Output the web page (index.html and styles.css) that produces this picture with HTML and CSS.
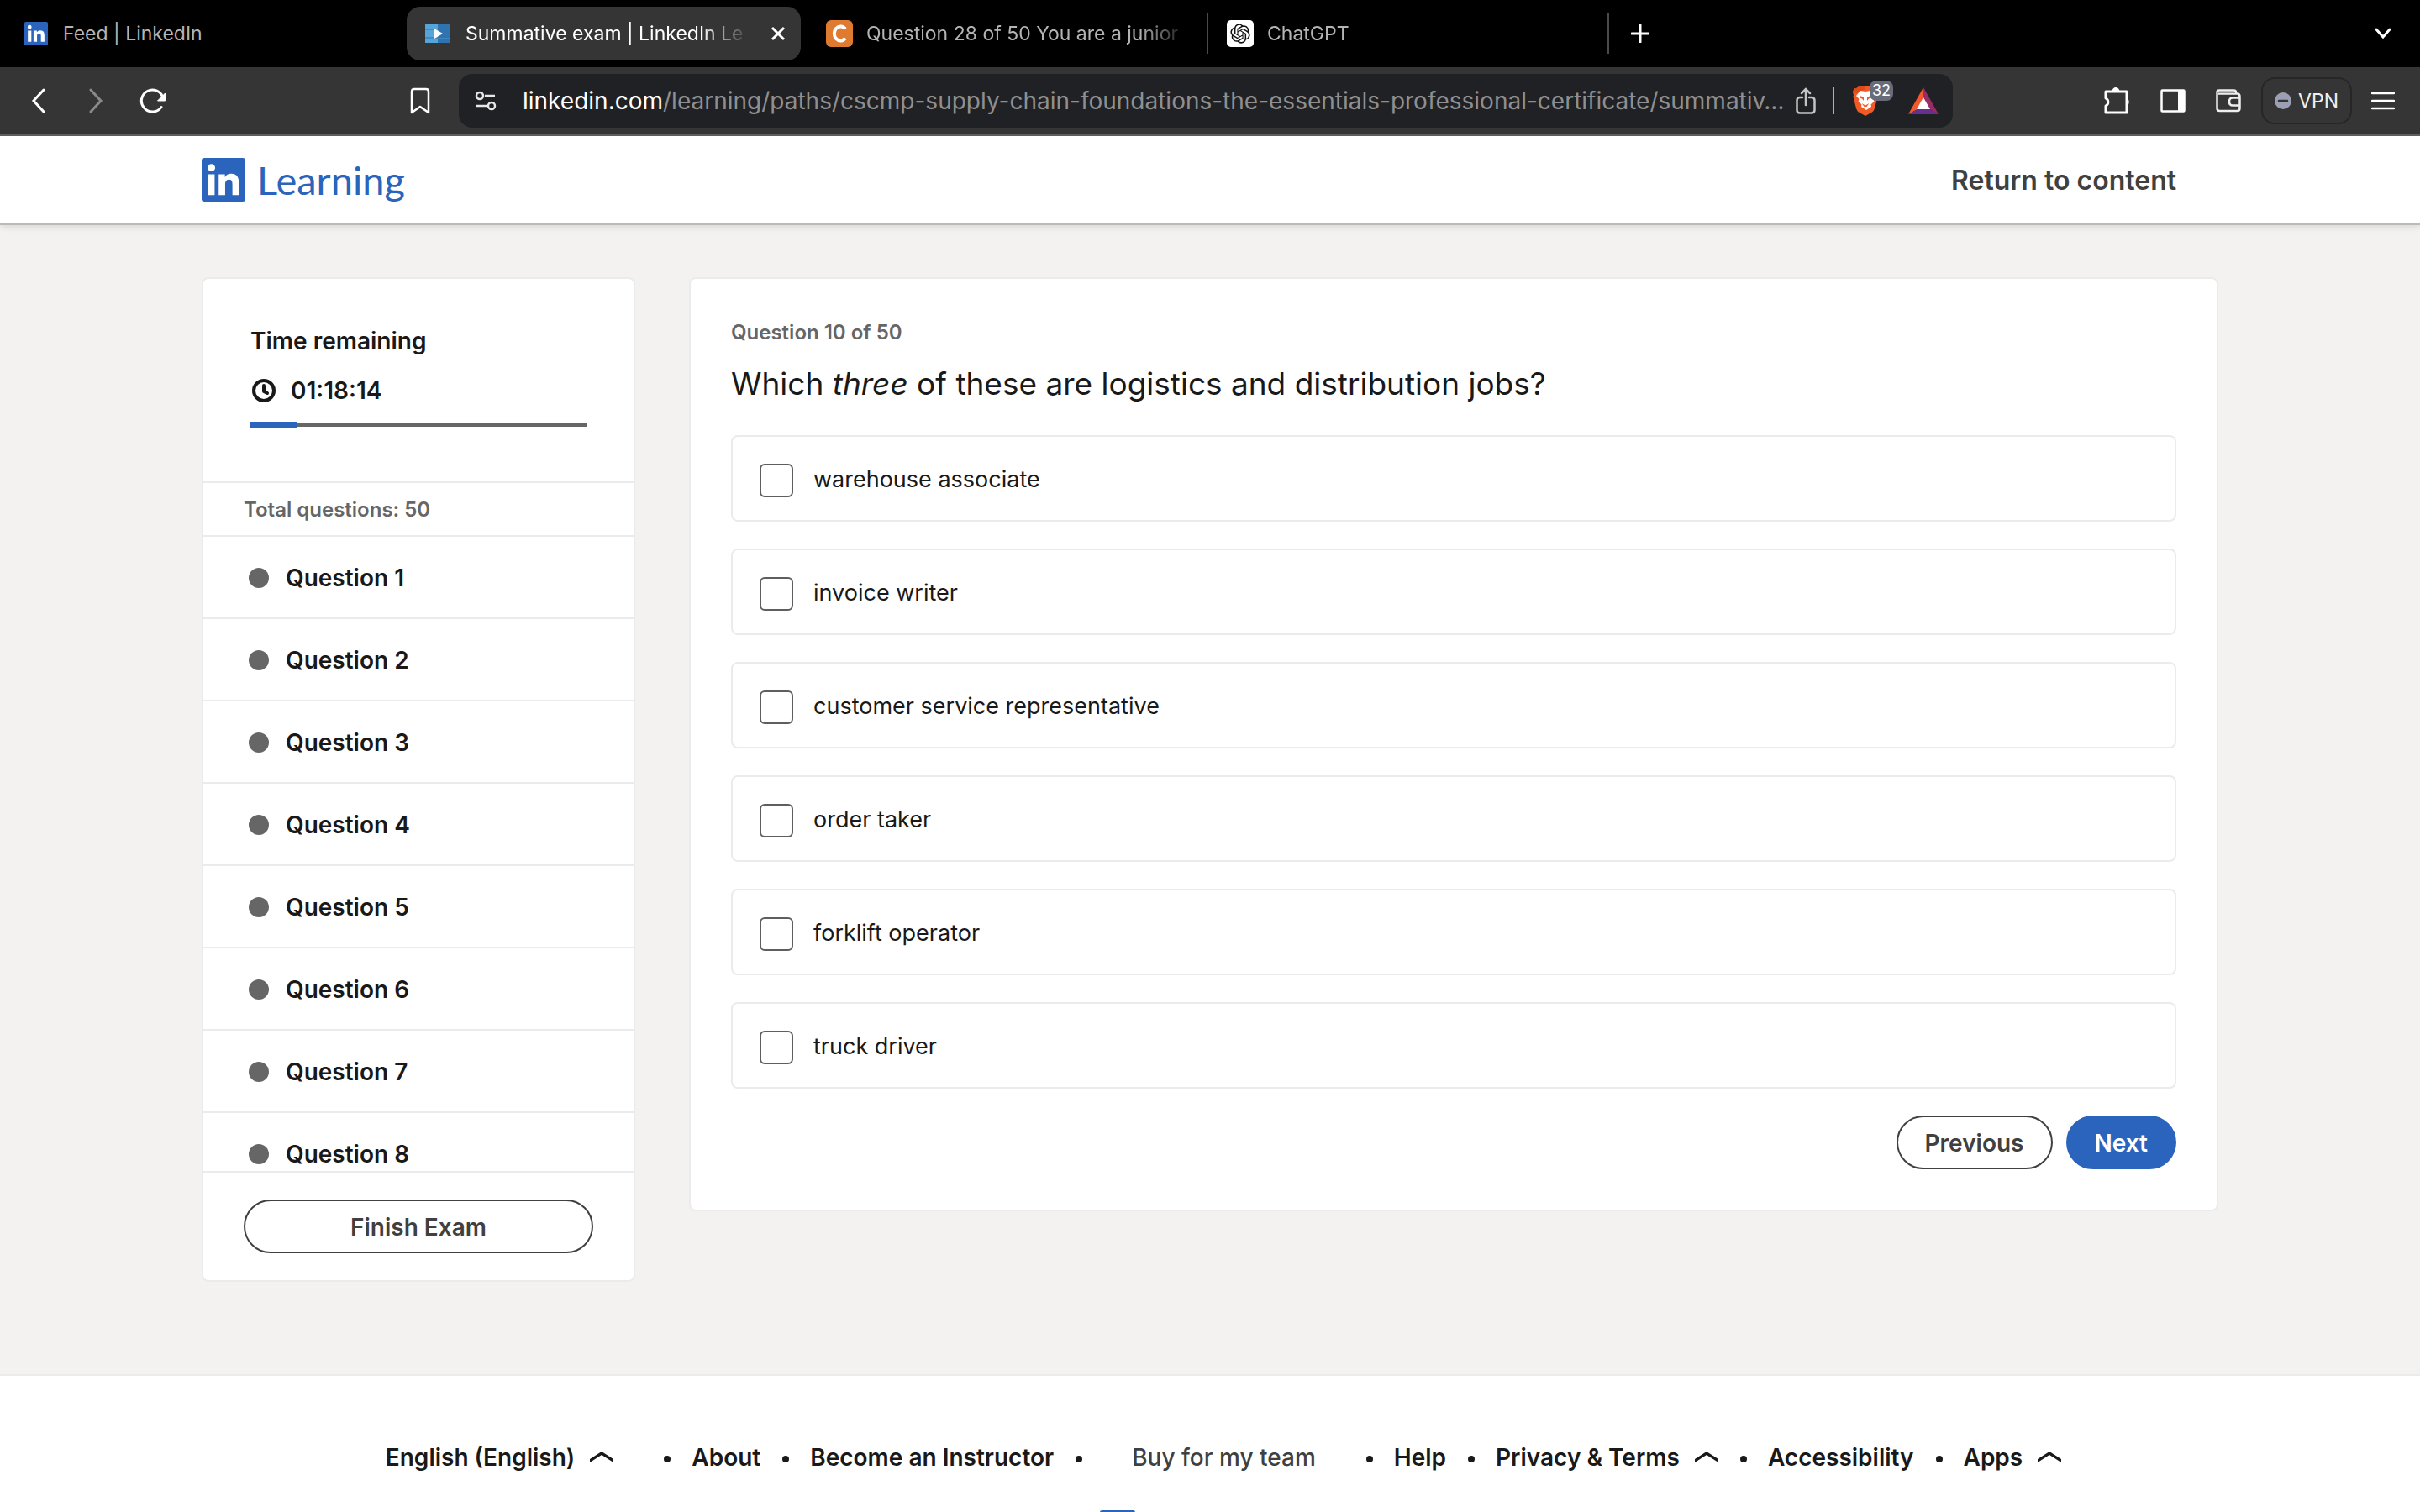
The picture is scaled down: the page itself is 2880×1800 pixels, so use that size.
FILE: index.html
```html
<!DOCTYPE html>
<html lang="en">
<head>
<meta charset="utf-8">
<title>Summative exam | LinkedIn Learning</title>
<link rel="stylesheet" href="styles.css">
</head>
<body>
<svg class="defs" aria-hidden="true">
  <symbol id="in-logo" viewBox="0 0 24 24">
    <rect width="24" height="24" rx="1.4" fill="#2b64bc"/>
    <path fill="#fff" d="M20.447 20.452h-3.554v-5.569c0-1.328-.027-3.037-1.852-3.037-1.853 0-2.136 1.445-2.136 2.939v5.667H9.351V9h3.414v1.561h.046c.477-.9 1.637-1.85 3.37-1.85 3.601 0 4.267 2.37 4.267 5.455v6.286zM5.337 7.433a2.062 2.062 0 0 1-2.063-2.065 2.064 2.064 0 1 1 2.063 2.065zm1.782 13.019H3.555V9h3.564v11.452z"/>
  </symbol>
  <symbol id="caret-up" viewBox="0 0 28 14">
    <path d="M0 13V9L14 0l14 9v4L14 4z" fill="currentColor"/>
  </symbol>
</svg>

<div class="browser">
  <div class="tabs" role="tablist">
    <button class="tab" role="tab">
      <svg class="favicon" width="28" height="28"><use href="#in-logo"/></svg>
      <span class="tab-title">Feed | LinkedIn</span>
    </button>
    <button class="tab tab-active" role="tab" aria-selected="true">
      <svg class="favicon" width="30" height="22" viewBox="0 0 30 22">
        <rect width="15" height="22" fill="#56a5d8"/><rect x="15" width="15" height="22" fill="#2f74b0"/>
        <path d="M0 6h15M0 16h15" stroke="#3f8cc4" stroke-width="2"/><path d="M15 17h15" stroke="#3d86c0" stroke-width="2"/>
        <path d="M11 5v12l10-6z" fill="#fff"/>
      </svg>
      <span class="tab-title">Summative exam | LinkedIn Le</span>
      <svg class="tab-close" width="18" height="18" viewBox="0 0 18 18"><path d="M2 2l14 14M16 2L2 16" stroke="#fff" stroke-width="3"/></svg>
    </button>
    <button class="tab tab-ruled" role="tab">
      <svg class="favicon" width="32" height="32" viewBox="0 0 32 32">
        <rect width="32" height="32" rx="6" fill="#e07a2e"/>
        <path d="M23 10.500a7.500 8.500 0 1 0 0 11" fill="none" stroke="#fff" stroke-width="4"/>
      </svg>
      <span class="tab-title">Question 28 of 50 You are a junior</span>
    </button>
    <button class="tab tab-ruled" role="tab">
      <svg class="favicon" width="32" height="32" viewBox="-4.500 -4.500 33 33">
        <rect x="-4.500" y="-4.500" width="33" height="33" rx="5" fill="#fff"/>
        <path fill="#111" d="M22.2819 9.8211a5.9847 5.9847 0 0 0-.5157-4.9108 6.0462 6.0462 0 0 0-6.5098-2.9A6.0651 6.0651 0 0 0 4.9807 4.1818a5.9847 5.9847 0 0 0-3.9977 2.9 6.0462 6.0462 0 0 0 .7427 7.0966 5.98 5.98 0 0 0 .511 4.9107 6.051 6.051 0 0 0 6.5146 2.9001A5.9847 5.9847 0 0 0 13.2599 24a6.0557 6.0557 0 0 0 5.7718-4.2058 5.9894 5.9894 0 0 0 3.9977-2.9001 6.0557 6.0557 0 0 0-.7475-7.0729zm-9.022 12.6081a4.4755 4.4755 0 0 1-2.8764-1.0408l.1419-.0804 4.7783-2.7582a.7948.7948 0 0 0 .3927-.6813v-6.7369l2.02 1.1686a.071.071 0 0 1 .038.052v5.5826a4.504 4.504 0 0 1-4.4945 4.4944zm-9.6607-4.1254a4.4708 4.4708 0 0 1-.5346-3.0137l.142.0852 4.783 2.7582a.7712.7712 0 0 0 .7806 0l5.8428-3.3685v2.3324a.0804.0804 0 0 1-.0332.0615L9.74 19.9502a4.4992 4.4992 0 0 1-6.1408-1.6464zM2.3408 7.8956a4.485 4.485 0 0 1 2.3655-1.9728V11.6a.7664.7664 0 0 0 .3879.6765l5.8144 3.3543-2.0201 1.1685a.0757.0757 0 0 1-.071 0l-4.8303-2.7865A4.504 4.504 0 0 1 2.3408 7.872zm16.5963 3.8558L13.1038 8.364 15.1192 7.2a.0757.0757 0 0 1 .071 0l4.8303 2.7913a4.4944 4.4944 0 0 1-.6765 8.1042v-5.6772a.79.79 0 0 0-.407-.667zm2.0107-3.0231l-.142-.0852-4.7735-2.7818a.7759.7759 0 0 0-.7854 0L9.409 9.2297V6.8974a.0662.0662 0 0 1 .0284-.0615l4.8303-2.7866a4.4992 4.4992 0 0 1 6.6802 4.66zM8.3065 12.863l-2.02-1.1638a.0804.0804 0 0 1-.038-.0567V6.0742a4.4992 4.4992 0 0 1 7.3757-3.4537l-.142.0805L8.704 5.459a.7948.7948 0 0 0-.3927.6813zm1.0976-2.3654l2.602-1.4998 2.6069 1.4998v2.9994l-2.5974 1.4997-2.6067-1.4997Z"/>
      </svg>
      <span class="tab-title">ChatGPT</span>
    </button>
    <button class="icon-button new-tab" aria-label="New tab">
      <svg width="22" height="22" viewBox="0 0 22 22"><path d="M11 1v20M1 11h20" stroke="#fff" stroke-width="3" stroke-linecap="round"/></svg>
    </button>
    <button class="icon-button tab-search" aria-label="Search tabs">
      <svg width="20" height="14" viewBox="0 0 20 14"><path d="M2 2l8 9 8-9" fill="none" stroke="#fff" stroke-width="3" stroke-linecap="round"/></svg>
    </button>
  </div>

  <div class="toolbar">
    <div class="nav-tools">
      <button class="icon-button" aria-label="Back">
        <svg width="18" height="30" viewBox="0 0 18 30"><path d="M15 2L3 15l12 13" fill="none" stroke="#fff" stroke-width="3" stroke-linecap="round"/></svg>
      </button>
      <button class="icon-button" aria-label="Forward">
        <svg width="18" height="30" viewBox="0 0 18 30"><path d="M3 2l12 13L3 28" fill="none" stroke="#8a8a8a" stroke-width="3" stroke-linecap="round"/></svg>
      </button>
      <button class="icon-button" aria-label="Reload">
        <svg width="32" height="30" viewBox="0 0 32 30"><path d="M28 12A13 13 0 1 0 26 22.500" fill="none" stroke="#fff" stroke-width="3" stroke-linecap="round"/><path d="M30.500 6v9h-9z" fill="#fff" stroke="#fff" stroke-linejoin="round"/></svg>
      </button>
      <button class="icon-button bookmark" aria-label="Bookmark">
        <svg width="24" height="32" viewBox="0 0 24 32"><path d="M2 30V5q0-3 3-3h14q3 0 3 3v25l-10-7z" fill="none" stroke="#fff" stroke-width="2.500" stroke-linejoin="round"/></svg>
      </button>
    </div>

    <div class="address">
      <svg class="site-icon" width="26" height="24" viewBox="0 0 26 24"><g fill="none" stroke="#e8e8e8" stroke-width="2.500"><circle cx="6" cy="6" r="4"/><path d="M12 6h12M2 18h12"/><circle cx="20" cy="18" r="4"/></g></svg>
      <div class="url"><span class="url-host">linkedin.com</span>/learning/paths/cscmp-supply-chain-foundations-the-essentials-professional-certificate/summativ…</div>
      <button class="plain share" aria-label="Share">
        <svg width="24" height="32" viewBox="0 0 24 32"><path d="M8 12H5q-3.500 0-3.500 3.500V27q0 3.500 3.500 3.500h14q3.500 0 3.500-3.500V15.500q0-3.500-3.500-3.500h-3M12 21V3M7 7l5-5 5 5" fill="none" stroke="#c4c4c4" stroke-width="2.500" stroke-linecap="round"/></svg>
      </button>
      <span class="address-rule"></span>
      <button class="plain shields" aria-label="Brave Shields">
        <svg width="30" height="36" viewBox="0 0 30 36">
          <path d="M7 0h16l3 3 3-.500L30 8l-1 3 .500 2-3.500 14q-1 3-3 4.500L15 36l-8-4.500q-2-1.500-3-4.500L.500 13 1 11 0 8l1.500-5L4 3.500z" fill="#f15a24"/>
          <path d="M7 0h8v4L4 9 0 8l1.500-5L4 3.500z" fill="#dd4a1c"/>
          <path d="M9 6l6 1 6-1 5 6-1.500 4 1 2.500-4 4 .5 2.500-6 4-6-4 .5-2.500-4-4 1-2.500L4 12z" fill="#fff"/>
          <path d="M8 12l5 1.500v4.500l-2-2.500-3-1zM22 12l-5 1.500v4.500l2-2.500 3-1zM10.500 21l4.500 2.500 4.500-2.500-3 4h-3z" fill="#f15a24"/>
        </svg>
        <span class="badge">32</span>
      </button>
      <button class="plain" aria-label="Brave Rewards">
        <svg width="36" height="32" viewBox="0 0 36 32">
          <path d="M18 0v14l-7 12L0 32z" fill="#f4592e"/><path d="M18 0l18 32-11-6-7-12z" fill="#992c66"/><path d="M0 32l11-6h14l11 6z" fill="#653090"/><path d="M18 12l8 14H10z" fill="#fff"/>
        </svg>
      </button>
    </div>

    <div class="page-tools">
      <button class="icon-button" aria-label="Extensions">
        <svg width="34" height="34" viewBox="0 0 34 34"><path d="M3 6h25v25H3v-8a5 5 0 0 0 0-9z" fill="none" stroke="#fff" stroke-width="3" stroke-linejoin="round"/><path d="M10.500 6a4.500 5 0 0 1 9 0zM28 14a5 5 0 0 1 0 9z" fill="#fff"/></svg>
      </button>
      <button class="icon-button" aria-label="Sidebar">
        <svg width="30" height="28" viewBox="0 0 30 28"><rect x="1.500" y="1.500" width="27" height="25" rx="1" fill="none" stroke="#fff" stroke-width="2.500"/><path d="M21 1h8v26h-8z" fill="#fff"/></svg>
      </button>
      <button class="icon-button" aria-label="Wallet">
        <svg width="30" height="28" viewBox="0 0 30 28"><g fill="none" stroke="#eee" stroke-width="2.500"><path d="M24 5V4q0-2.500-2.500-2.500H4Q1.500 1.500 1.500 4v19q0 3 3 3h21q3 0 3-3V9q0-3.500-3-3.500H3"/><path d="M28 10.500h-8q-4 0-4 4.500t4 4.500h8"/></g><path d="M2 3h21v2H2z" fill="#999"/></svg>
      </button>
      <button class="vpn">
        <svg width="20" height="20" viewBox="0 0 20 20"><circle cx="10" cy="10" r="10" fill="#9c9fb3"/><path d="M5 10h10" stroke="#353535" stroke-width="2.500" stroke-linecap="round"/></svg>
        VPN
      </button>
      <button class="icon-button menu" aria-label="Menu">
        <svg width="28" height="22" viewBox="0 0 28 22"><path d="M1 2h26M1 11h26M1 20h26" stroke="#fff" stroke-width="2.500" stroke-linecap="round"/></svg>
      </button>
    </div>
  </div>

  <div class="page">
    <header class="site-header">
      <a class="brand" href="#">
        <svg width="52" height="52"><use href="#in-logo"/></svg>
        <span>Learning</span>
      </a>
      <a class="return" href="#">Return to content</a>
    </header>

    <main class="exam">
      <aside class="card sidebar">
        <section class="timer">
          <h2>Time remaining</h2>
          <div class="clock">
            <svg width="30" height="30" viewBox="0 0 30 30"><circle cx="16" cy="15" r="12" fill="none" stroke="#191919" stroke-width="4"/><path d="M16 9v7l4 2" fill="none" stroke="#191919" stroke-width="4" stroke-linecap="round" stroke-linejoin="round"/></svg>
            <time>01:18:14</time>
          </div>
          <div class="progress"><div class="progress-fill" style="width: 14%"></div></div>
        </section>
        <h3 class="total">Total questions: 50</h3>
        <ol class="questions">
          <li><a href="#">Question 1</a></li>
          <li><a href="#">Question 2</a></li>
          <li><a href="#">Question 3</a></li>
          <li><a href="#">Question 4</a></li>
          <li><a href="#">Question 5</a></li>
          <li><a href="#">Question 6</a></li>
          <li><a href="#">Question 7</a></li>
          <li><a href="#">Question 8</a></li>
        </ol>
        <div class="finish"><button class="pill">Finish Exam</button></div>
      </aside>

      <form class="card question">
        <p class="step">Question 10 of 50</p>
        <h1>Which <em>three</em> of these are logistics and distribution jobs?</h1>
        <div class="options">
          <label class="option"><input type="checkbox"><span>warehouse associate</span></label>
          <label class="option"><input type="checkbox"><span>invoice writer</span></label>
          <label class="option"><input type="checkbox"><span>customer service representative</span></label>
          <label class="option"><input type="checkbox"><span>order taker</span></label>
          <label class="option"><input type="checkbox"><span>forklift operator</span></label>
          <label class="option"><input type="checkbox"><span>truck driver</span></label>
        </div>
        <div class="actions">
          <button type="button" class="pill">Previous</button>
          <button type="button" class="pill pill-primary">Next</button>
        </div>
      </form>
    </main>

    <footer class="site-footer">
      <ul class="links">
        <li class="wide"><button class="plain">English (English)<svg width="28" height="14"><use href="#caret-up"/></svg></button></li>
        <li><a href="#">About</a></li>
        <li><a href="#">Become an Instructor</a></li>
        <li class="wide muted"><a href="#">Buy for my team</a></li>
        <li><a href="#">Help</a></li>
        <li><button class="plain">Privacy &amp; Terms<svg width="28" height="14"><use href="#caret-up"/></svg></button></li>
        <li><a href="#">Accessibility</a></li>
        <li><button class="plain">Apps<svg width="28" height="14"><use href="#caret-up"/></svg></button></li>
      </ul>
      <div class="footer-brand"><svg width="42" height="42"><use href="#in-logo"/></svg></div>
    </footer>
  </div>
</div>
</body>
</html>
```
FILE: styles.css
```css
* { box-sizing: border-box; }

body {
  margin: 0;
  font: 28px/40px Inter, "Liberation Sans", sans-serif;
  color: #191919;
  background: #fff;
}

h1, h2, h3, p, ol, ul { margin: 0; padding: 0; list-style: none; }
a { color: inherit; text-decoration: none; }
button { font: inherit; color: inherit; cursor: pointer; }
svg { display: block; flex: none; }
.defs { display: none; }

.browser {
  display: flex;
  flex-direction: column;
  height: 100vh;
  overflow: hidden;
}

/* Tab strip */
.tabs {
  display: flex;
  flex: none;
  align-items: center;
  height: 80px;
  padding: 0 10px 0 7px;
  background: #000;
}
.tab {
  display: flex;
  align-items: center;
  flex: 0 1 477px;
  min-width: 0;
  height: 64px;
  padding: 0 22px;
  border: 0;
  background: none;
  color: #b4b4b4;
  font-size: 23px;
  line-height: 32px;
  text-align: left;
}
.favicon { margin-right: 18px; }
.tab-title {
  flex: 1;
  min-width: 0;
  white-space: nowrap;
}
.tab-active .tab-title,
.tab-ruled .tab-title { mask-image: linear-gradient(90deg, #000 calc(100% - 60px), transparent); }
.tab-active {
  flex-basis: 469px;
  margin-right: 8px;
  padding-right: 18px;
  border-radius: 16px;
  background: #353535;
  color: #fff;
}
.tab-close { margin-left: 24px; }
.tab-ruled { position: relative; }
.tab-ruled .favicon { margin-right: 16px; }
.tab-ruled::after {
  content: "";
  position: absolute;
  top: 8px;
  right: 0;
  width: 2px;
  height: 48px;
  background: #4a4a4a;
}

.icon-button {
  display: flex;
  flex: none;
  align-items: center;
  justify-content: center;
  width: 68px;
  height: 64px;
  padding: 0;
  border: 0;
  background: none;
}
.new-tab { width: 74px; }
.tab-search { margin-left: auto; }

/* Toolbar */
.toolbar {
  display: flex;
  flex: none;
  align-items: center;
  height: 82px;
  border-bottom: 2px solid #5e5e5e;
  background: #353535;
}
.nav-tools {
  display: flex;
  flex: 0 0 546px;
  padding: 0 12px;
}
.bookmark { margin-left: auto; }
.address {
  display: flex;
  flex: 1;
  align-items: center;
  min-width: 0;
  height: 64px;
  padding: 0 17px 0 19px;
  border-radius: 16px;
  background: #202124;
}
.url {
  flex: 1;
  min-width: 0;
  margin-left: 31px;
  overflow: hidden;
  white-space: nowrap;
  color: #8f8f90;
}
.url-host { color: #fff; }
.address-rule {
  width: 2px;
  height: 32px;
  margin: 0 22px 0 20px;
  background: #b0b0b0;
}
.plain {
  display: flex;
  align-items: center;
  padding: 0;
  border: 0;
  background: none;
}
.shields { position: relative; margin-right: 36px; }
.badge {
  position: absolute;
  top: -6px;
  left: 20px;
  width: 28px;
  height: 24px;
  border-radius: 8px;
  background: #686b7a;
  color: #fff;
  font-size: 18px;
  line-height: 24px;
  text-align: center;
}
.page-tools {
  display: flex;
  flex: 0 0 556px;
  align-items: center;
  justify-content: flex-end;
  padding-right: 11px;
}
.page-tools .icon-button { width: 66px; }
.vpn {
  display: flex;
  align-items: center;
  gap: 8px;
  height: 56px;
  margin: 0 4px 0 6px;
  padding: 0 14px;
  border: 2px solid #262626;
  border-radius: 16px;
  background: none;
  color: #f0f0f0;
  font-size: 23px;
  line-height: 32px;
}

/* Page */
.page {
  flex: 1;
  min-height: 0;
  overflow: hidden;
  background: #f3f2f0;
}
.site-header {
  display: flex;
  align-items: center;
  justify-content: space-between;
  height: 106px;
  padding: 0 290px 0 240px;
  border-bottom: 2px solid #bcbab8;
  background: #fff;
  box-shadow: 0 2px 8px rgba(0, 0, 0, .12);
}
.brand {
  display: flex;
  align-items: center;
  gap: 14px;
  color: #2b64bc;
  font: 47px/52px Lato, sans-serif;
}
.return {
  padding-top: 2px;
  color: #404040;
  font-size: 32px;
  font-weight: 600;
}
.exam {
  display: flex;
  align-items: flex-start;
  gap: 64px;
  padding: 62px 240px 110px;
}
.card {
  border: 2px solid #ebebeb;
  border-radius: 8px;
  background: #fff;
}

/* Sidebar */
.sidebar {
  flex: 0 0 516px;
  font-weight: 600;
}
.timer { padding: 54px 56px 63px; }
.timer h2 { font-size: 28px; font-weight: 600; }
.clock {
  display: flex;
  align-items: center;
  gap: 18px;
  margin: 19px 0 17px;
}
.progress {
  display: flex;
  align-items: center;
  height: 8px;
  background: linear-gradient(#666, #666) center / 100% 4px no-repeat;
}
.progress-fill { height: 8px; background: #2b64bc; }
.total {
  padding: 12px 48px 10px;
  border: solid #ebebeb;
  border-width: 2px 0;
  color: #666;
  font-size: 24px;
  font-weight: 600;
}
.questions { height: 755px; overflow: hidden; }
.questions li { border-bottom: 2px solid #ebebeb; }
.questions a {
  display: flex;
  align-items: center;
  gap: 20px;
  padding: 29px 54px 27px;
}
.questions a::before {
  content: "";
  width: 24px;
  height: 24px;
  border-radius: 50%;
  background: #666;
}
.finish { padding: 32px 48px; border-top: 2px solid #ebebeb; }
.finish .pill { width: 100%; }

.pill {
  height: 64px;
  padding: 2px 32px 0;
  border: 2px solid #404040;
  border-radius: 32px;
  background: #fff;
  color: #404040;
  font-weight: 600;
}
.pill-primary {
  border-color: #2b64bc;
  background: #2b64bc;
  color: #fff;
}

/* Question */
.question {
  flex: 1;
  min-width: 0;
  padding: 48px;
}
.step {
  color: #666;
  font-size: 24px;
  font-weight: 600;
  line-height: 32px;
}
h1 {
  margin: 21px 0 37px;
  font-size: 37px;
  font-weight: 400;
  line-height: 48px;
}
.options { display: grid; gap: 32px; }
.option {
  display: flex;
  align-items: flex-start;
  gap: 24px;
  padding: 32px 32px 27px;
  border: 2px solid #ebebeb;
  border-radius: 8px;
  font-size: 27px;
  line-height: 38px;
}
.option input {
  appearance: none;
  width: 40px;
  height: 40px;
  margin: 0;
  border: 2px solid #5e5e5e;
  border-radius: 6px;
  background: #fff;
}
.actions {
  display: flex;
  justify-content: flex-end;
  gap: 16px;
  margin-top: 32px;
}

/* Footer */
.site-footer {
  border-top: 2px solid #ebebeb;
  padding-top: 77px;
  background: #fff;
}
.links {
  display: flex;
  justify-content: center;
  padding-left: 32px;
  font-weight: 600;
  white-space: nowrap;
}
.links li { display: flex; align-items: center; }
.links li + li::before {
  content: "";
  width: 8px;
  height: 8px;
  margin: 4px 25px 0 26px;
  border-radius: 50%;
  background: #191919;
}
.links .plain { gap: 18px; font-weight: 600; }
.links .wide > * { margin-right: 34px; }
.links .muted > * { margin-left: 34px; }
.muted a { color: #404040; font-weight: 500; }
.footer-brand {
  width: 262px;
  margin: 43px auto 80px;
}
```
